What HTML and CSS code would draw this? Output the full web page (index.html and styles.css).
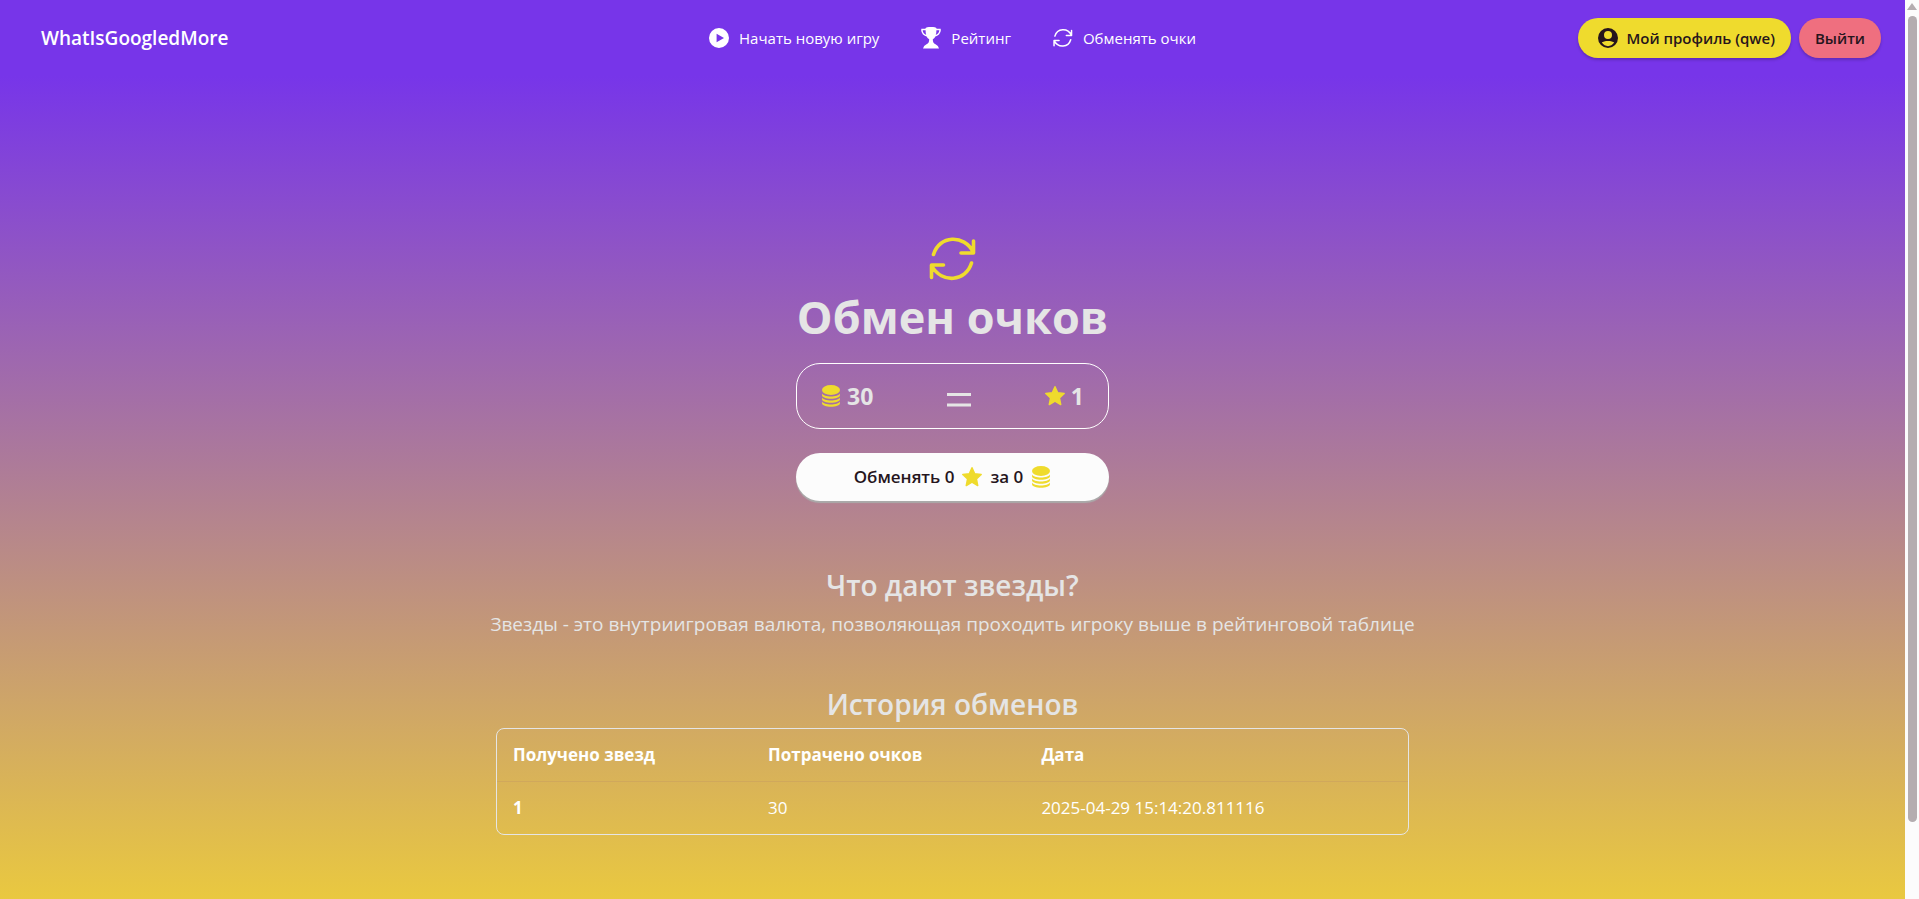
FILE: index.html
```html
<!DOCTYPE html>
<html lang="ru">
<head>
<meta charset="utf-8">
<meta name="viewport" content="width=device-width, initial-scale=1">
<title>WhatIsGoogledMore</title>
<link rel="stylesheet" href="styles.css">
</head>
<body>
<svg class="sprite" aria-hidden="true">
  <symbol id="refresh" viewBox="0 0 48 48">
    <path d="M4.500 19.500C10 .5 35 -1.500 44.500 17.500M44.500 6V18H32M42.500 28C37 46.500 13 49.500 2.500 30.500M2.500 42.500V30H14.500" fill="none" stroke="currentColor" stroke-width="3.6" stroke-linecap="round" stroke-linejoin="round"/>
  </symbol>
  <symbol id="coins" viewBox="0 0 20 24">
    <ellipse cx="10" cy="6" rx="9" ry="5"/>
    <path d="M1 9.500C3 13.500 17 13.500 19 9.500V11C19 16 1 16 1 11ZM1 13.500C3 17.500 17 17.500 19 13.500V15C19 20 1 20 1 15ZM1 17.500C3 21.500 17 21.500 19 17.500V19C19 24 1 24 1 19Z"/>
  </symbol>
  <symbol id="star" viewBox="0 0 20 20">
    <path d="M10 .8 12.700 6.700 19.200 7.500 14.400 12 15.700 18.500 10 15.200 4.300 18.500 5.600 12 .8 7.500 7.300 6.700Z" stroke="currentColor" stroke-width="1.500" stroke-linejoin="round"/>
  </symbol>
</svg>
<div class="scroller">
  <header class="navbar">
    <a class="brand" href="#">WhatIsGoogledMore</a>
    <nav class="menu">
      <a href="#"><svg class="icon" viewBox="0 0 20 20"><path fill-rule="evenodd" d="M10 0a10 10 0 1 0 0 20 10 10 0 0 0 0-20ZM7.600 5.800 15 10l-7.400 4.200Z"/></svg>Начать новую игру</a>
      <a href="#"><svg class="icon trophy" viewBox="0 0 20 22"><path d="M4.500 1.200C4.500-.3 15.500-.3 15.500 1.200Q15.500 11 11.800 12.200C11.800 15 12.500 16.500 14.500 17.200Q17.500 18.500 18 21.500H2Q2.500 18.500 5.500 17.200C7.500 16.500 8.200 15 8.200 12.200Q4.500 11 4.500 1.200Z"/><path d="M5 2.500H1C.5 6 3.500 8.800 7 9M15 2.500h4c.5 3.500-2.500 6.300-6 6.500" fill="none" stroke="currentColor" stroke-width="1.500"/></svg>Рейтинг</a>
      <a href="#"><svg class="icon"><use href="#refresh"/></svg>Обменять очки</a>
    </nav>
    <div class="actions">
      <button class="btn btn-yellow"><svg class="icon" viewBox="0 0 20 20"><path fill-rule="evenodd" d="M10 0a10 10 0 1 0 0 20 10 10 0 0 0 0-20Zm0 3a4 4 0 1 1 0 8 4 4 0 0 1 0-8ZM3.800 14.600C5.500 12.500 14.500 12.500 16.200 14.600 13 19.300 7 19.300 3.800 14.600Z"/></svg>Мой профиль (qwe)</button>
      <button class="btn btn-red">Выйти</button>
    </div>
  </header>
  <main class="main">
    <section class="exchange">
      <svg class="hero-icon"><use href="#refresh"/></svg>
      <h1>Обмен очков</h1>
      <div class="rate">
        <span class="amount"><svg class="coin"><use href="#coins"/></svg>30</span>
        <svg class="equals" viewBox="0 0 24 16"><path d="M0 2.500h24M0 13h24" stroke="currentColor" stroke-width="3"/></svg>
        <span class="amount"><svg class="star"><use href="#star"/></svg>1</span>
      </div>
      <button class="convert">Обменять 0 <svg class="star"><use href="#star"/></svg> за 0 <svg class="coin"><use href="#coins"/></svg></button>
    </section>
    <section class="block">
      <h2>Что дают звезды?</h2>
      <p>Звезды - это внутриигровая валюта, позволяющая проходить игроку выше в рейтинговой таблице</p>
    </section>
    <section class="block history">
      <h2>История обменов</h2>
      <div class="table-box">
        <table>
          <colgroup><col class="col-stars"><col class="col-points"><col></colgroup>
          <thead><tr><th scope="col">Получено звезд</th><th scope="col">Потрачено очков</th><th scope="col">Дата</th></tr></thead>
          <tbody><tr><th scope="row">1</th><td>30</td><td>2025-04-29 15:14:20.811116</td></tr></tbody>
        </table>
      </div>
    </section>
  </main>
</div>
<div class="scrollbar" aria-hidden="true"><span class="arrow"></span><span class="thumb"></span></div>
</body>
</html>
```
FILE: styles.css
```css
:root {
  --purple: #7735e9;
  --yellow: #efdb2d;
  --light: #e5e5e5;
  --ink: #26151c;
}
* { box-sizing: border-box; }
body {
  margin: 0;
  display: flex;
  height: 100vh;
  overflow: hidden;
  font-family: "Open Sans", "Noto Sans", sans-serif;
  font-size: 16px;
  line-height: 24px;
  color: var(--light);
}
h1, h2, p { margin: 0; }
a { color: inherit; text-decoration: none; }
svg { fill: currentColor; flex: none; }
button { border: 0; font: inherit; cursor: pointer; }
.sprite { position: absolute; width: 0; height: 0; }
.scroller { flex: 1; overflow-y: auto; scrollbar-width: none; }

.navbar {
  display: grid;
  grid-template-columns: 1fr auto 1fr;
  align-items: center;
  height: 76px;
  padding: 0 24px;
  background: var(--purple);
  color: #fff;
}
.brand { padding-left: 17px; font-size: 19px; font-weight: 600; }
.menu { display: flex; gap: 42px; font-size: 15px; }
.menu a { display: flex; align-items: center; gap: 10px; }
.icon { width: 20px; height: 20px; }
.trophy { height: 22px; }
.actions { display: flex; justify-content: flex-end; gap: 8px; }
.btn {
  display: flex;
  align-items: center;
  gap: 8px;
  height: 40px;
  padding: 0 16px;
  border-radius: 20px;
  font-size: 15px;
  font-weight: 600;
  color: var(--ink);
  box-shadow: 0 2px 3px #0003;
}
.btn-yellow { background: var(--yellow); padding-left: 20px; }
.btn-red { background: #ef6f7f; }

.main {
  display: flex;
  flex-direction: column;
  align-items: center;
  min-height: 100vh;
  padding-top: 159px;
  background: linear-gradient(var(--purple), #f4d630);
}
.exchange { display: flex; flex-direction: column; width: 313px; }
.hero-icon { width: 48px; height: 48px; align-self: center; color: var(--yellow); }
h1 { margin-top: 10px; font-size: 45px; line-height: 48px; font-weight: 700; text-align: center; }
.rate {
  display: flex;
  align-items: center;
  justify-content: space-between;
  height: 66px;
  margin-top: 22px;
  padding: 0 24px;
  border: 1px solid #fff;
  border-radius: 24px;
}
.amount { display: flex; align-items: center; gap: 6px; font-size: 23px; font-weight: 700; }
.coin { width: 20px; height: 24px; color: var(--yellow); }
.star { width: 20px; height: 20px; color: var(--yellow); }
.equals { width: 24px; height: 16px; margin-top: 8px; }
.convert {
  display: flex;
  align-items: center;
  justify-content: center;
  gap: 8px;
  height: 48px;
  margin-top: 24px;
  border-radius: 24px;
  background: #fcfcfc;
  color: var(--ink);
  font-size: 17px;
  font-weight: 600;
  box-shadow: 0 2px 1px #aaa;
}
.block { margin-top: 64px; text-align: center; }
.history { width: 100%; max-width: 913px; margin-top: 44px; }
h2 { font-size: 28px; line-height: 40px; font-weight: 600; }
p { font-size: 19px; line-height: 32px; margin-top: 3px; }
.table-box { margin-top: 4px; border: 1px solid var(--light); border-radius: 8px; }
table { width: 100%; border-collapse: collapse; color: #fff; font-size: 17px; text-align: left; }
.col-stars { width: 28%; }
.col-points { width: 30%; }
th, td { padding: 14px 16px; font-weight: 400; }
th { font-weight: 700; }
thead tr { border-bottom: 1px solid #d0a85c; }

.scrollbar {
  display: flex;
  flex-direction: column;
  align-items: center;
  gap: 6px;
  width: 14px;
  padding-top: 3px;
  background: #fcfcfc;
}
.arrow { border: 5px solid transparent; border-top: 0; border-bottom: 7px solid #b4adb0; }
.thumb { width: 9px; height: 90%; border-radius: 5px; background: #b4adb0; }
```
